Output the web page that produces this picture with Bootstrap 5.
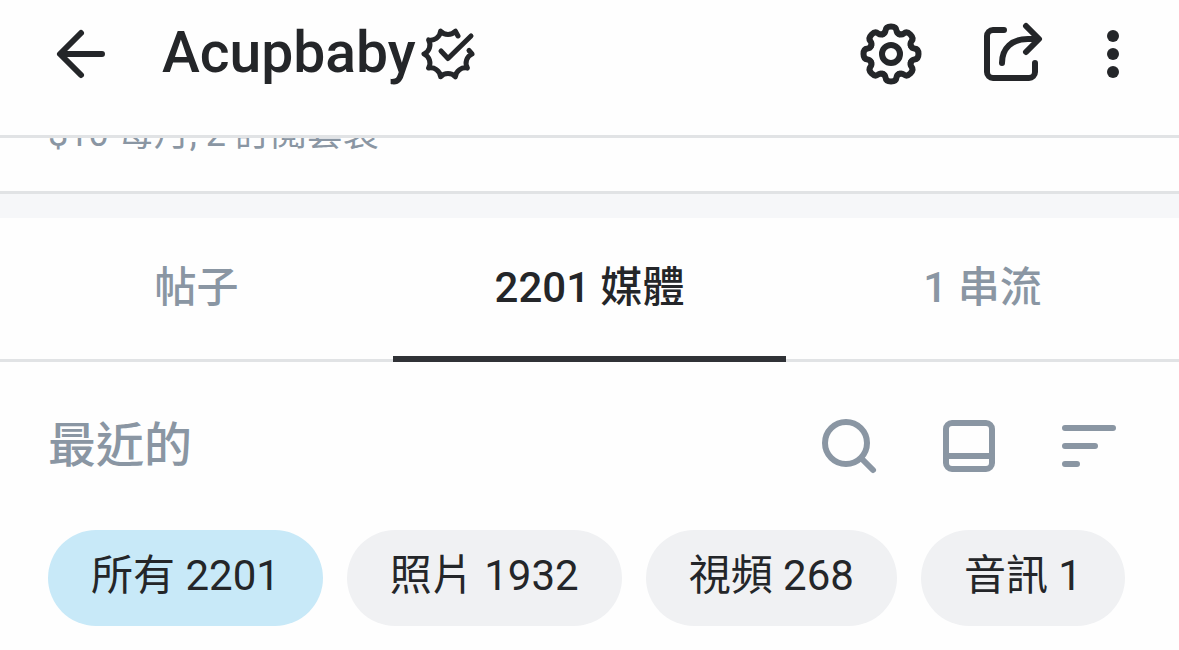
<!DOCTYPE html>
<html lang="zh-Hant">
<head>
<meta charset="utf-8">
<meta name="viewport" content="width=device-width, initial-scale=1">
<title>Acupbaby</title>
<link href="https://cdn.jsdelivr.net/npm/bootstrap@5.3.0/dist/css/bootstrap.min.css" rel="stylesheet">
<style>
  :root { --ink: #242629; --muted-ink: #8a96a3; --rule: #e1e3e5; }
  body { font-family: Roboto, "Noto Sans CJK TC", sans-serif; color: var(--ink); background: #fefefe; }
  .topbar { padding: 18px 48px 45px; border-bottom: 3px solid var(--rule); }
  .topbar-title { font-size: 57px; line-height: 66px; padding-bottom: 2px; font-weight: 500; margin: 0 -4px 0 42px; }
  .topbar-actions, .tool-icons { gap: 48px; }
  .icon-btn { padding: 0; border: 0; background: none; color: inherit; display: block; }
  svg { display: block; fill: none; stroke: currentColor; stroke-width: 6; stroke-linecap: round; stroke-linejoin: round; }
  .verified { stroke-width: 5; }
  .plan { height: 56px; padding: 0 48px 39px; border-bottom: 3px solid var(--rule); color: var(--muted-ink); font-size: 36px; line-height: 36px; }
  .divider { height: 24px; background: #f6f7f9; }
  .media-tabs { box-shadow: inset 0 -3px var(--rule); }
  .media-tabs .nav-link { padding: 43px 0 41px; border-bottom: 6px solid transparent; border-radius: 0; color: var(--muted-ink); font-size: 42px; line-height: 54px; font-weight: 500; }
  .media-tabs .nav-link.active { color: var(--ink); border-color: #303236; }
  .tools { padding: 48px 54px 48px 48px; color: var(--muted-ink); }
  .tools h2 { font-size: 48px; line-height: 72px; font-weight: 500; }
  .chips { gap: 24px; padding: 0 48px 24px; }
  .chip { padding: 19px 43px 23px; border: 0; background: #f0f1f3; color: var(--ink); font-size: 42px; line-height: 54px; white-space: nowrap; }
  .chip.active { background: #c8e9f8; }
</style>
</head>
<body>
<header class="topbar d-flex align-items-center">
  <button class="icon-btn" type="button" aria-label="返回">
    <svg width="72" height="72" viewBox="0 0 72 72"><path d="M33 15 12 36l21 21M13 36h41"/></svg>
  </button>
  <h1 class="topbar-title">Acupbaby</h1>
  <svg class="verified" width="72" height="72" viewBox="0 0 72 72" aria-hidden="true">
    <path d="M46 18 43.400 13.200A10 10 0 0 1 28.600 13.200A10 10 0 0 1 16.600 21.900A10 10 0 0 1 12 36A10 10 0 0 1 16.600 50.100A10 10 0 0 1 28.600 58.800A10 10 0 0 1 43.400 58.800A10 10 0 0 1 55.400 50.100A10 10 0 0 1 60 36L57 32.500M29 33l7 7.500L59 18"/>
  </svg>
  <div class="topbar-actions d-flex align-items-center ms-auto">
    <button class="icon-btn" type="button" aria-label="設定">
      <svg width="72" height="72" viewBox="-36 -36 72 72">
        <defs><path id="tooth" d="M-8.200-19.900C-6.200-20.700-5.700-22-5.500-23.500-5.200-26.300-3.500-27.500 0-27.500S5.200-26.300 5.500-23.500C5.700-22 6.200-20.700 8.200-19.900"/></defs>
        <use href="#tooth"/><use href="#tooth" transform="rotate(45)"/><use href="#tooth" transform="rotate(90)"/><use href="#tooth" transform="rotate(135)"/>
        <use href="#tooth" transform="rotate(180)"/><use href="#tooth" transform="rotate(225)"/><use href="#tooth" transform="rotate(270)"/><use href="#tooth" transform="rotate(315)"/>
        <circle r="9"/>
      </svg>
    </button>
    <button class="icon-btn" type="button" aria-label="分享">
      <svg width="72" height="72" viewBox="0 0 72 72"><path d="M29 12H18a6 6 0 0 0-6 6v36a6 6 0 0 0 6 6h36a6 6 0 0 0 6-6v-9M27 45c0-15 10-24 26-24h10M51 8 64 21 51 34"/></svg>
    </button>
    <button class="icon-btn" type="button" aria-label="更多">
      <svg width="36" height="72" viewBox="0 0 36 72"><g fill="currentColor" stroke="none"><circle cx="18" cy="18" r="6"/><circle cx="18" cy="36" r="6"/><circle cx="18" cy="54" r="6"/></g></svg>
    </button>
  </div>
</header>
<main>
  <div class="plan d-flex align-items-end overflow-hidden">$10 每月, 2 訂閱套裝</div>
  <div class="divider"></div>
  <nav class="media-tabs nav nav-justified">
    <a class="nav-link" href="#">帖子</a>
    <a class="nav-link active" href="#" aria-current="page">2201 媒體</a>
    <a class="nav-link" href="#">1 串流</a>
  </nav>
  <section class="tools d-flex align-items-center justify-content-between">
    <h2 class="mb-0">最近的</h2>
    <div class="tool-icons d-flex">
      <button class="icon-btn" type="button" aria-label="搜尋">
        <svg width="72" height="72" viewBox="0 0 72 72"><circle cx="33" cy="33" r="21"/><path d="m49 49 11 11"/></svg>
      </button>
      <button class="icon-btn" type="button" aria-label="版面">
        <svg width="72" height="72" viewBox="0 0 72 72"><rect x="13" y="13" width="46" height="46" rx="6"/><path d="M13 46h46"/></svg>
      </button>
      <button class="icon-btn" type="button" aria-label="排序">
        <svg width="72" height="72" viewBox="0 0 72 72"><path d="M12 18h48M12 36h30M12 54h12"/></svg>
      </button>
    </div>
  </section>
  <div class="chips d-flex">
    <button class="chip rounded-pill active" type="button">所有 2201</button>
    <button class="chip rounded-pill" type="button">照片 1932</button>
    <button class="chip rounded-pill" type="button">視頻 268</button>
    <button class="chip rounded-pill" type="button">音訊 1</button>
  </div>
</main>
<script src="https://cdn.jsdelivr.net/npm/bootstrap@5.3.0/dist/js/bootstrap.bundle.min.js"></script>
</body>
</html>
